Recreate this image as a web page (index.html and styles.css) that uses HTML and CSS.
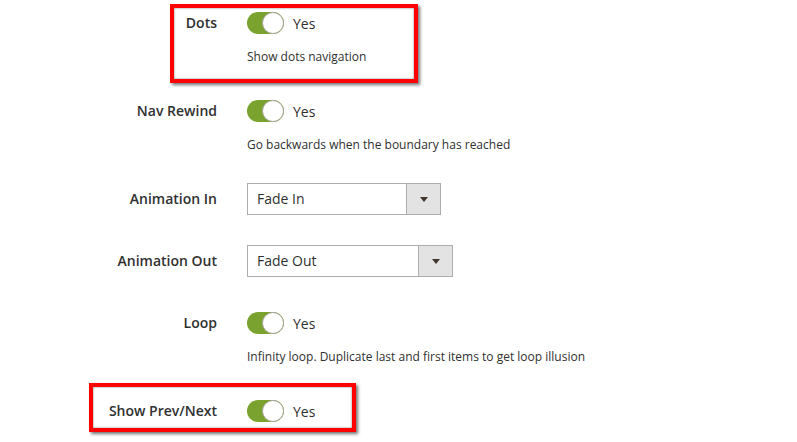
FILE: index.html
```html
<!DOCTYPE html>
<html>
<head>
<meta charset="utf-8">
<link rel="stylesheet" href="styles.css">
</head>
<body>
<div class="form">
  <div class="field">
    <div class="label">Dots</div>
    <div class="control"><span class="switch"></span><span class="switch-text">Yes</span></div>
    <div class="note">Show dots navigation</div>
  </div>
  <div class="field">
    <div class="label">Nav Rewind</div>
    <div class="control"><span class="switch"></span><span class="switch-text">Yes</span></div>
    <div class="note">Go backwards when the boundary has reached</div>
  </div>
  <div class="field">
    <div class="label">Animation In</div>
    <div class="control"><div class="select select-in"><span class="select-value">Fade In</span><span class="select-btn"><span class="arrow"></span></span></div></div>
  </div>
  <div class="field">
    <div class="label">Animation Out</div>
    <div class="control"><div class="select select-out"><span class="select-value">Fade Out</span><span class="select-btn"><span class="arrow"></span></span></div></div>
  </div>
  <div class="field">
    <div class="label">Loop</div>
    <div class="control"><span class="switch"></span><span class="switch-text">Yes</span></div>
    <div class="note">Infinity loop. Duplicate last and first items to get loop illusion</div>
  </div>
  <div class="field">
    <div class="label">Show Prev/Next</div>
    <div class="control"><span class="switch"></span><span class="switch-text">Yes</span></div>
  </div>
</div>
<div class="highlight highlight-dots"></div>
<div class="highlight highlight-prev"></div>
</body>
</html>
```
FILE: styles.css
```css
html, body {
  margin: 0;
  padding: 0;
  background: #fff;
}
body {
  width: 797px;
  height: 442px;
  overflow: hidden;
  position: relative;
  font-family: "Open Sans", "Liberation Sans", sans-serif;
  color: #303030;
}
.form {
  display: flex;
  flex-direction: column;
  gap: 30px;
  padding-top: 7px;
}
.field {
  display: grid;
  grid-template-columns: 217px 1fr;
  column-gap: 30px;
  row-gap: 9px;
}
.label {
  height: 32px;
  line-height: 32px;
  text-align: right;
  font-size: 14px;
  font-weight: 600;
  color: #303030;
}
.control {
  height: 32px;
  display: flex;
  align-items: center;
}
.note {
  grid-column: 2;
  font-size: 12px;
  line-height: 17px;
  color: #303030;
}
.switch {
  position: relative;
  width: 37px;
  height: 22px;
  border-radius: 12px;
  background: #79a22e;
  box-sizing: border-box;
  flex: none;
}
.switch::after {
  content: "";
  position: absolute;
  top: 0;
  left: 15px;
  width: 22px;
  height: 22px;
  box-sizing: border-box;
  border-radius: 50%;
  background: #fff;
  border: 1px solid #aaa6a0;
}
.switch-text {
  margin-left: 9px;
  font-size: 14px;
  color: #303030;
}
.select {
  display: flex;
  height: 32px;
  box-sizing: border-box;
  border: 1px solid #adadad;
  background: #fff;
}
.select-in { width: 194px; }
.select-out { width: 206px; }
.select-value {
  flex: 1;
  padding-left: 9px;
  font-size: 14px;
  line-height: 30px;
  color: #303030;
}
.select-btn {
  width: 33px;
  border-left: 1px solid #adadad;
  background: #e3e3e3;
  display: flex;
  align-items: center;
  justify-content: center;
}
.arrow {
  width: 0;
  height: 0;
  border-left: 4px solid transparent;
  border-right: 4px solid transparent;
  border-top: 5px solid #41362f;
  margin-top: 1px;
}
.highlight {
  position: absolute;
  box-sizing: border-box;
  border: 4px solid #ff0000;
  box-shadow: 2px 2px 3px rgba(0,0,0,0.55), inset 0 0 2px rgba(0,0,0,0.6);
}
.highlight-dots {
  left: 170px;
  top: 4px;
  width: 248px;
  height: 79px;
}
.highlight-prev {
  left: 89px;
  top: 383px;
  width: 267px;
  height: 49px;
}
```
